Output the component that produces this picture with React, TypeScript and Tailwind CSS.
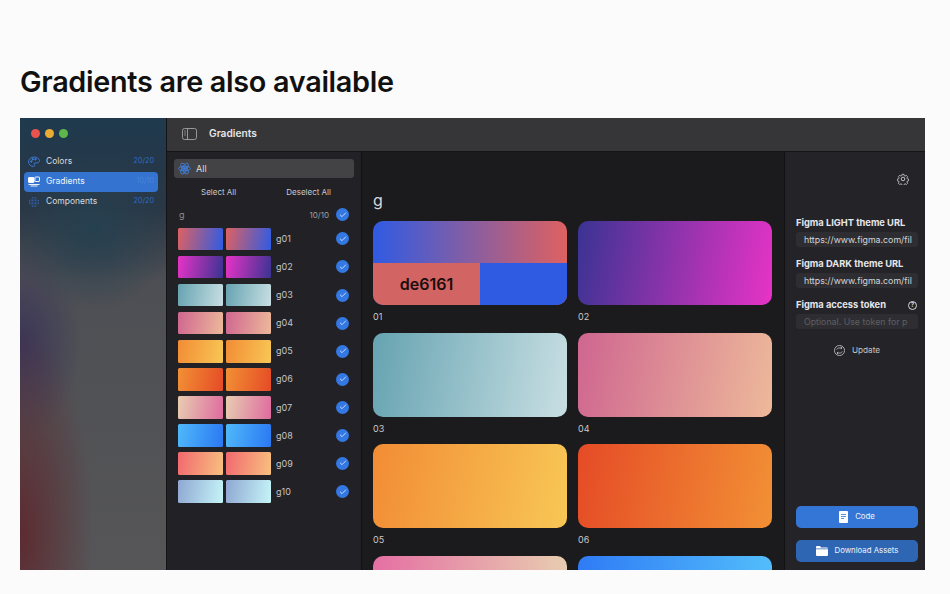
import React from 'react'
import { Check } from 'lucide-react'

const font = "font-['Inter','Liberation_Sans',sans-serif]"

const gradients = [
    { id: '01', to: 'bg-[linear-gradient(90deg,#2f5be3,#de6161)]', back: 'bg-[linear-gradient(100deg,#de6161,#2f5be3)]' },
    { id: '02', to: 'bg-[linear-gradient(100deg,#3a3392,#e733c6)]', back: 'bg-[linear-gradient(100deg,#e733c6,#3a3392)]' },
    { id: '03', to: 'bg-[linear-gradient(100deg,#66a3b1,#c8dfe3)]', back: 'bg-[linear-gradient(100deg,#66a3b1,#c8dfe3)]' },
    { id: '04', to: 'bg-[linear-gradient(100deg,#cf6690,#edb99a)]', back: 'bg-[linear-gradient(100deg,#cf6690,#edb99a)]' },
    { id: '05', to: 'bg-[linear-gradient(100deg,#f28c35,#f8c755)]', back: 'bg-[linear-gradient(100deg,#f28c35,#f8c755)]' },
    { id: '06', to: 'bg-[linear-gradient(100deg,#e54b26,#f29035)]', back: 'bg-[linear-gradient(100deg,#f29035,#e54b26)]' },
    { id: '07', to: 'bg-[linear-gradient(90deg,#e56fa3,#e8cdb0)]', back: 'bg-[linear-gradient(100deg,#e8cdb0,#de6b9f)]' },
    { id: '08', to: 'bg-[linear-gradient(90deg,#2f7bf5,#52bdfb)]', back: 'bg-[linear-gradient(100deg,#4fb9fb,#2b78f2)]' },
    { id: '09', to: '', back: 'bg-[linear-gradient(100deg,#f2686f,#f8c17f)]' },
    { id: '10', to: '', back: 'bg-[linear-gradient(100deg,#8fa7d2,#c6f5f8)]' },
]

const Tick = () => (
    <span className="flex h-[13px] w-[13px] items-center justify-center rounded-full bg-[#3478e4]">
        <Check size={8} strokeWidth={2.2} className="text-white" />
    </span>
)

const Atom = ({ size = 13 }: { size?: number }) => (
    <svg width={size} height={size} viewBox="0 0 24 24" fill="none" stroke="#3f7fe0" strokeWidth="1.7">
        <circle cx="12" cy="12" r="2.2" fill="#3f7fe0" />
        <ellipse cx="12" cy="12" rx="11" ry="4.4" />
        <ellipse cx="12" cy="12" rx="11" ry="4.4" transform="rotate(60 12 12)" />
        <ellipse cx="12" cy="12" rx="11" ry="4.4" transform="rotate(120 12 12)" />
    </svg>
)

const Palette = () => (
    <svg width="12" height="12" viewBox="0 0 24 24" fill="none" stroke="#3f7fe0" strokeWidth="1.8">
        <path d="M12 2C6 2 1 6.300 1 11.600c0 5 4.400 9.400 9.800 9.400 1.700 0 2.400-1 2.400-2.100 0-1.500-1.200-2-1.200-3.200 0-1.100.9-1.800 2-1.800h3.400c3.200 0 5.600-1.800 5.600-4.600C23 5.600 18 2 12 2z" />
        <circle cx="6.500" cy="11" r="1.500" fill="#3f7fe0" />
        <circle cx="9.500" cy="6.500" r="1.500" fill="#3f7fe0" />
        <circle cx="15" cy="6.500" r="1.500" fill="#3f7fe0" />
    </svg>
)

const GradientsIcon = () => (
    <svg width="12" height="11" viewBox="0 0 24 22" fill="none" stroke="#fff" strokeWidth="1.8">
        <rect x="1" y="3" width="11" height="10" rx="1" fill="#fff" />
        <rect x="14" y="2" width="9" height="9" rx="1" />
        <path d="M1 17h22M5 20h14" />
    </svg>
)

const Dots = () => (
    <svg width="12" height="12" viewBox="0 0 24 24" fill="#3366b8">
        {[-9, -6, -3, 0, 3, 6, 9].flatMap((x) =>
            [-9, -6, -3, 0, 3, 6, 9]
                .filter((y) => x * x + y * y < 110)
                .map((y) => <circle key={`${x}${y}`} cx={12 + x} cy={12 + y} r="1" />)
        )}
    </svg>
)

const SidebarToggle = () => (
    <svg width="15" height="12" viewBox="0 0 30 24" fill="none" stroke="#a3a3a5" strokeWidth="1.8">
        <rect x="1" y="1" width="28" height="22" rx="4" />
        <path d="M11 1v22M4.500 6h3M4.500 10h3M4.500 14h3" />
    </svg>
)

const Gear = () => (
    <svg width="12" height="12" viewBox="0 0 24 24" fill="none" stroke="#c9c9cb" strokeWidth="1.900" strokeLinejoin="round">
        <path d="M10 1.500h4l.7 3.200 2 .9 2.800-1.700 2.800 2.800-1.700 2.800.9 2 3 .5v4l-3 .7-.9 2 1.700 2.800-2.800 2.800-2.800-1.700-2 .9-.7 3h-4l-.7-3-2-.9-2.800 1.700-2.800-2.800 1.700-2.800-.9-2-3-.7v-4l3-.7.9-2-1.700-2.800 2.800-2.800 2.800 1.700 2-.9z" transform="translate(1.200 1.200) scale(.9)" />
        <circle cx="12" cy="12" r="3.600" />
    </svg>
)

const UpdateIcon = () => (
    <svg width="11" height="11" viewBox="0 0 24 24" fill="none" stroke="#c5c5c7" strokeWidth="1.800">
        <circle cx="12" cy="12" r="11" />
        <path d="M6 10c1-2.500 3-3.500 5.500-3.500H17M15 4l2.500 2.500L15 9M18 14c-1 2.500-3 3.500-5.500 3.500H7M9 15l-2.500 2.500L9 20" />
    </svg>
)

const DocIcon = () => (
    <svg width="9" height="12" viewBox="0 0 18 24">
        <path d="M2 0h14a2 2 0 0 1 2 2v20a2 2 0 0 1-2 2H2a2 2 0 0 1-2-2V2a2 2 0 0 1 2-2z" fill="#fff" />
        <path d="M4 7h10M4 11h10M4 15h6" stroke="#3476d6" strokeWidth="1.600" />
    </svg>
)

const FolderIcon = () => (
    <svg width="12" height="10" viewBox="0 0 24 20" fill="#fff">
        <path d="M0 2a2 2 0 0 1 2-2h6l2 3h12a2 2 0 0 1 2 2H0z" />
        <path d="M0 6.500h24V18a2 2 0 0 1-2 2H2a2 2 0 0 1-2-2z" />
    </svg>
)

const Field = ({ label, value, muted, help }: { label: string; value: string; muted?: boolean; help?: boolean }) => (
    <div>
        <div className="flex h-[14px] items-center justify-between pr-[1px]">
            <span className="text-[9.300px] font-bold text-[#e6e6e8]">{label}</span>
            {help && (
                <span className="flex h-[9px] w-[9px] items-center justify-center rounded-full border border-[#d8d8da] text-[6px] font-bold leading-none text-[#d8d8da]">?</span>
            )}
        </div>
        <div className={`mt-[2px] h-[15px] whitespace-nowrap rounded-[3px] bg-[#2e2e32] pl-2 text-[8.800px] leading-[15px] ${muted ? 'text-[#5e5e62]' : 'text-[#d5d5d7]'}`}>
            {value}
        </div>
    </div>
)

const App = () => {
    return (
        <div className={`h-[594px] w-[950px] overflow-hidden bg-[#fbfbfb] pl-5 pr-[25px] pt-[63px] ${font}`}>
            <h1 className="h-[38px] text-[28.800px] font-semibold leading-[38px] tracking-[-0.3px] text-[#111]">Gradients are also available</h1>

            <div className="mt-[17px] flex h-[452px] overflow-hidden bg-[#1b1b1d]">
                {/* barra lateral */}
                <aside className="flex w-[147px] shrink-0 flex-col border-r border-[#141416] bg-[radial-gradient(circle_at_50%_24%,#264050_0,#26405000_24%),radial-gradient(ellipse_at_0%_92%,#5c2b31_0,#5c2b3100_36%),radial-gradient(ellipse_at_0%_50%,#3b3558_0,#3b355800_30%),linear-gradient(180deg,#1f3a4e_0,#2a3644_20%,#4e4f54_36%,#565658_100%)] pl-1 pr-2">
                    <div className="flex gap-[5px] pl-[6.500px] pt-[11px]">
                        <span className="h-[9px] w-[9px] rounded-full bg-[#e9524d]" />
                        <span className="h-[9px] w-[9px] rounded-full bg-[#e9ac35]" />
                        <span className="h-[9px] w-[9px] rounded-full bg-[#5cb84b]" />
                    </div>
                    <div className="mt-[13.500px] flex h-5 items-center pl-[4px] pr-[4px] text-[8.500px] text-[#d8dadd]">
                        <Palette />
                        <span className="ml-[6px] flex-1">Colors</span>
                        <span className="text-[7.200px] text-[#2f6cc4]">20/20</span>
                    </div>
                    <div className="flex h-5 items-center rounded-[4px] bg-[#3573d0] pl-[4px] pr-[4px] text-[8.500px] text-[#eef3fa]">
                        <GradientsIcon />
                        <span className="ml-[6px] flex-1">Gradients</span>
                        <span className="text-[7.200px] text-[#4a83d8]">10/10</span>
                    </div>
                    <div className="flex h-5 items-center pl-[4px] pr-[4px] text-[8.500px] text-[#d8dadd]">
                        <Dots />
                        <span className="ml-[6px] flex-1">Components</span>
                        <span className="text-[7.200px] text-[#2f6cc4]">20/20</span>
                    </div>
                </aside>

                <div className="flex min-w-0 flex-1 flex-col">
                    <header className="flex h-[34px] shrink-0 items-center border-b border-[#141416] bg-[#363638] pb-[1px] pl-[15px]">
                        <SidebarToggle />
                        <span className="ml-[12px] text-[10.200px] font-semibold text-[#e4e4e6]">Gradients</span>
                    </header>

                    <div className="flex min-h-0 flex-1">
                        {/* lista */}
                        <section className="w-[195px] shrink-0 border-r border-[#111113] bg-[#222226] px-[7px] pt-[7px]">
                            <div className="flex h-[19px] items-center rounded-[3px] bg-[#434345] pl-[4px] text-[9px] text-[#dcdcde]">
                                <Atom />
                                <span className="ml-[5px]">All</span>
                            </div>
                            <div className="mt-[7px] flex h-[13px] items-center text-[8px] text-[#c9c9cb]">
                                <span className="ml-[27px]">Select All</span>
                                <span className="ml-[50px]">Deselect All</span>
                            </div>
                            <div className="mt-[10px] flex h-[13px] items-center pl-[5px] pr-[5px] text-[8px] text-[#8c8c90]">
                                <span className="flex-1 text-[9px]">g</span>
                                <span className="mr-[7px] text-[#a0a0a4]">10/10</span>
                                <Tick />
                            </div>
                            <div className="mt-[6.500px] flex flex-col gap-[5.400px] pl-[4px] pr-[5px]">
                                {gradients.map((g) => (
                                    <div key={g.id} className="flex h-[22.700px] items-center">
                                        <div className={`h-full w-[44.500px] rounded-[1.500px] ${g.back}`} />
                                        <div className={`ml-[3px] h-full w-[45px] rounded-[1.500px] ${g.back}`} />
                                        <span className="ml-[5.500px] flex-1 text-[9px] text-[#c4c4c6]">g{g.id}</span>
                                        <Tick />
                                    </div>
                                ))}
                            </div>
                        </section>

                        {/* tarjetas */}
                        <main className="min-w-0 flex-1 overflow-hidden bg-[#1b1b1d] pl-[11px] pr-[11px] pt-[38px]">
                            <div className="h-[20px] text-[16px] leading-[20px] text-[#d8d8da]">g</div>
                            <div className="mt-[11px] grid grid-cols-[194px_194px] gap-x-[11px]">
                                {gradients.slice(0, 8).map((g, i) => (
                                    <div key={g.id} className="h-[111.700px]">
                                        <div className={`relative h-[84px] overflow-hidden rounded-[10px] ${g.to}`}>
                                            {g.id === '01' && (
                                                <div className="absolute inset-x-0 bottom-0 flex h-[42px]">
                                                    <div className="flex w-[107px] items-center justify-center bg-[#d26464] text-[16px] font-semibold text-[#1a0d0d]">de6161</div>
                                                    <div className="flex-1 bg-[#2f5be3]" />
                                                </div>
                                            )}
                                        </div>
                                        {i < 6 && <div className="mt-[6px] text-[9px] leading-[11px] text-[#c8c8ca]">{g.id}</div>}
                                    </div>
                                ))}
                            </div>
                        </main>

                        {/* panel derecho */}
                        <section className="flex w-[141px] shrink-0 flex-col border-l border-[#111113] bg-[#242428] pb-[8px] pl-[11px] pr-[7px] pt-[21px]">
                            <div className="flex justify-end pr-[9px]">
                                <Gear />
                            </div>
                            <div className="mt-[31px] flex flex-col gap-[10px]">
                                <Field label="Figma LIGHT theme URL" value="https://www.figma.com/fil" />
                                <Field label="Figma DARK theme URL" value="https://www.figma.com/fil" />
                                <Field label="Figma access token" value="Optional. Use token for p" muted help />
                            </div>
                            <div className="mt-[15px] flex items-center justify-center gap-[7px] text-[8.200px] text-[#c5c5c7]">
                                <UpdateIcon />
                                <span>Update</span>
                            </div>
                            <div className="mt-auto flex h-[22px] items-center justify-center gap-[7px] rounded-[5px] bg-[#3476d6] text-[7.800px] text-[#eef3fa]">
                                <DocIcon />
                                <span>Code</span>
                            </div>
                            <div className="mt-[12px] flex h-[22px] items-center justify-center gap-[7px] rounded-[5px] bg-[#2f66b4] text-[7.800px] text-[#eef3fa]">
                                <FolderIcon />
                                <span>Download Assets</span>
                            </div>
                        </section>
                    </div>
                </div>
            </div>
        </div>
    )
}

export default App
